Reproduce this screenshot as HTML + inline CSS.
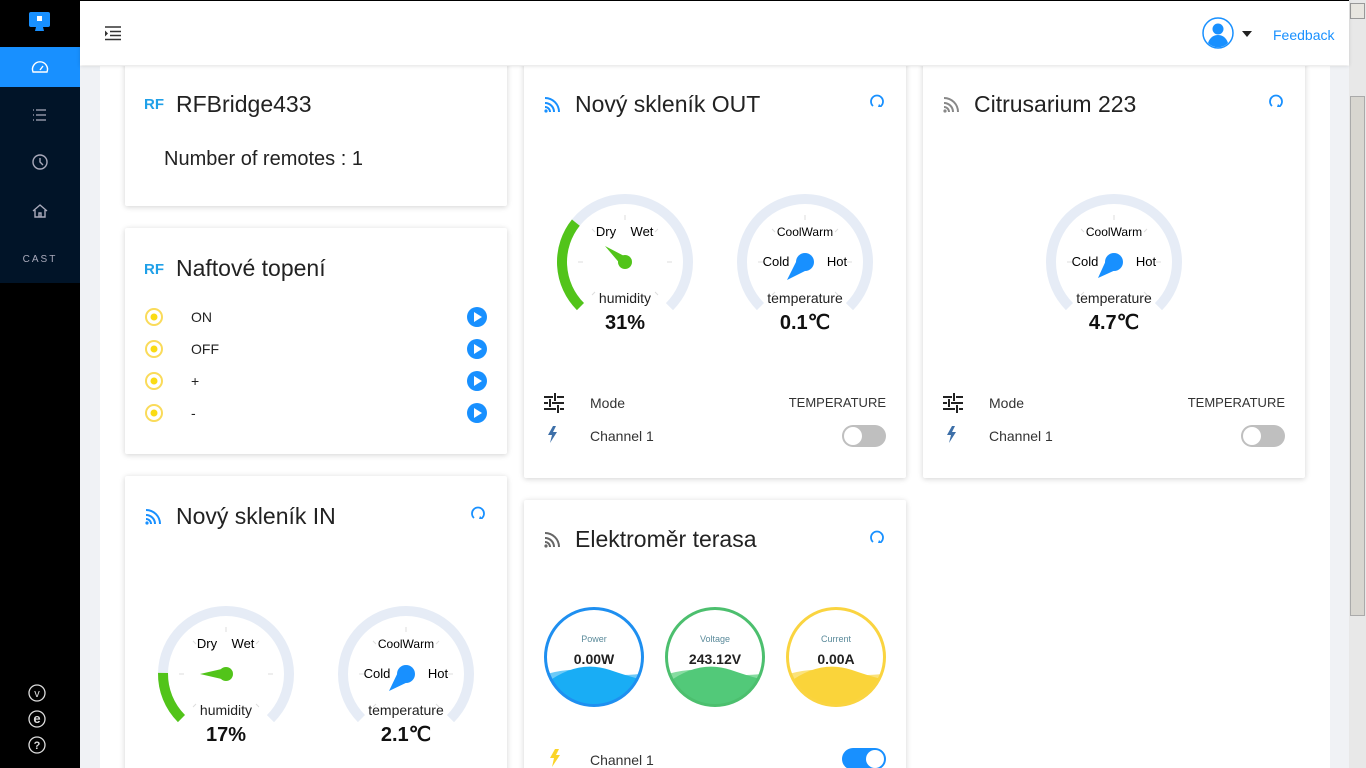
<!DOCTYPE html>
<html style="width:1366px;height:768px;overflow:hidden"><head><meta charset="utf-8"><style>
*{margin:0;padding:0;box-sizing:border-box}
body{width:1366px;height:768px;overflow:hidden;position:relative;font-family:"Liberation Sans",sans-serif;background:#f0f2f5;color:#222}
.abs{position:absolute}
.side{left:0;top:0;width:80px;height:768px;background:#000}
.nav{left:0;top:47px;width:80px;height:236px;background:#011428}
.main{left:100px;top:0;width:1230px;height:768px;background:#fff}
.hdr{left:80px;top:0;width:1269px;height:65px;background:#fff;border-top:1px solid #000;box-shadow:0 1px 4px rgba(0,0,0,.12);z-index:5}
.card{position:absolute;background:#fff;border-radius:2px;box-shadow:0 1px 6px rgba(0,0,0,.18)}
.title{position:absolute;font-size:23px;color:#222}
.lbl{position:absolute;font-size:14px;color:#333}
.tog{position:absolute;width:44px;height:22px;border-radius:11px;background:#bfbfbf}
.tog:after{content:"";position:absolute;top:2px;left:2px;width:18px;height:18px;border-radius:50%;background:#fff}
.tog.on{background:#1890ff}.tog.on:after{left:24px}
svg text{font-family:"Liberation Sans",sans-serif}
</style></head><body>
<div class="abs side"></div>
<div class="abs nav"></div>
<div class="abs" style="left:0;top:47px;width:80px;height:40px;background:#1890ff"></div>
<svg class="abs" style="left:0;top:0" width="80" height="768">
<rect x="29" y="12" width="21" height="15" rx="2" fill="#1890ff"/><rect x="37" y="16" width="5" height="5" fill="#fff"/><path d="M36 27h7l1 4h-9z" fill="#1890ff"/>
<g fill="none" stroke="#fff" stroke-width="1.4"><path d="M33 72a7.5 7.5 0 1 1 14 0z"/><path d="M40 70l3-4"/></g>
<g stroke="#aab" stroke-width="1.3"><path d="M36 110h10M36 115h10M36 120h10"/><path d="M33 110h1M33 115h1M33 120h1"/></g>
<g fill="none" stroke="#aab" stroke-width="1.4"><circle cx="40" cy="162" r="7"/><path d="M40 158v4l3 3"/><path d="M33 211l7-6 7 6M35 210v7h10v-7M39 217v-4h2v4"/></g>
<text x="40" y="262" fill="#aab" font-size="10" text-anchor="middle" letter-spacing="2">CAST</text>
<g fill="none" stroke="#ddd" stroke-width="1.3"><circle cx="37" cy="693" r="8"/><circle cx="37" cy="719" r="8"/><circle cx="37" cy="745" r="8"/></g>
<text x="37" y="697" fill="#ddd" font-size="11" text-anchor="middle">v</text>
<text x="37" y="723" fill="#ddd" font-size="13" font-weight="bold" text-anchor="middle">e</text>
<text x="37" y="749" fill="#ddd" font-size="11" font-weight="bold" text-anchor="middle">?</text>
</svg>
<div class="abs main"></div>
<div class="abs hdr">
<svg class="abs" style="left:24px;top:25px" width="18" height="15"><path d="M1 1h16M6 5.5h11M6 9.5h11M1 13.5h16" stroke="#333" stroke-width="1.5"/><path d="M1 4.5l3 3-3 3z" fill="#333"/></svg>
<svg class="abs" style="left:1122px;top:16px" width="34" height="34"><circle cx="16" cy="16" r="15" fill="#fff" stroke="#1890ff" stroke-width="1.5"/><circle cx="16" cy="12" r="5.5" fill="#1890ff"/><path d="M6 26c2-6 6-8 10-8s8 2 10 8a14 14 0 0 1-20 0z" fill="#1890ff"/></svg>
<div class="abs" style="left:1162px;top:30px;border:5px solid transparent;border-top:6px solid #222"></div>
<div class="abs" style="left:1193px;top:26px;font-size:14px;color:#1890ff">Feedback</div>
</div>
<div class="abs" style="left:1349px;top:0;width:17px;height:768px;background:#e8e8e8"></div>
<div class="abs" style="left:1350px;top:3px;width:15px;height:16px;background:#e8e6e0;border:1px solid #999"></div>
<div class="abs" style="left:1350px;top:96px;width:15px;height:520px;background:#d8d6d0;border:1px solid #aaa"></div>

<div class="card" style="left:125px;top:50px;width:382px;height:156px"></div>
<div class="abs" style="left:144px;top:96px;color:#1fa0e8;font-weight:bold;font-size:15px">RF</div>
<div class="title" style="left:176px;top:91px">RFBridge433</div>
<div class="abs" style="left:164px;top:148px;font-size:20px;color:#222">Number of remotes : 1</div>

<div class="card" style="left:125px;top:228px;width:382px;height:226px"></div>
<div class="abs" style="left:144px;top:261px;color:#1fa0e8;font-weight:bold;font-size:15px">RF</div>
<div class="title" style="left:176px;top:255px">Naftové topení</div>
<svg class="abs" style="left:140px;top:300px" width="360" height="130">
<g><circle cx="14" cy="17" r="8" fill="none" stroke="#fadb5a" stroke-width="2"/><circle cx="14" cy="17" r="3.5" fill="#fadb14"/>
<circle cx="14" cy="49" r="8" fill="none" stroke="#fadb5a" stroke-width="2"/><circle cx="14" cy="49" r="3.5" fill="#fadb14"/>
<circle cx="14" cy="81" r="8" fill="none" stroke="#fadb5a" stroke-width="2"/><circle cx="14" cy="81" r="3.5" fill="#fadb14"/>
<circle cx="14" cy="113" r="8" fill="none" stroke="#fadb5a" stroke-width="2"/><circle cx="14" cy="113" r="3.5" fill="#fadb14"/></g>
<g fill="#1890ff"><circle cx="337" cy="17" r="10"/><circle cx="337" cy="49" r="10"/><circle cx="337" cy="81" r="10"/><circle cx="337" cy="113" r="10"/></g>
<g fill="#fff"><path d="M334 12v10l8-5z"/><path d="M334 44v10l8-5z"/><path d="M334 76v10l8-5z"/><path d="M334 108v10l8-5z"/></g>
<g font-size="14" fill="#222"><text x="51" y="22">ON</text><text x="51" y="54">OFF</text><text x="51" y="86">+</text><text x="51" y="118">-</text></g>
</svg>

<div class="card" style="left:125px;top:476px;width:382px;height:320px"></div>
<svg class="abs" style="left:144px;top:508px" width="18" height="18"><g fill="none" stroke="#1890ff" stroke-width="2"><path d="M2 7a9 9 0 0 1 9 9M2 11a5 5 0 0 1 5 5M2 2a14 14 0 0 1 14 14"/></g><circle cx="3" cy="15" r="1.6" fill="#1890ff"/></svg>
<div class="title" style="left:176px;top:503px">Nový skleník IN</div>
<svg class="abs" style="left:469px;top:504px" width="18" height="18"><path d="M5 14A6 6 0 1 1 13 14" fill="none" stroke="#1890ff" stroke-width="1.8"/><path d="M11 12l3 3-4 0z" fill="#1890ff"/></svg>

<div class="card" style="left:524px;top:50px;width:382px;height:428px"></div>
<svg class="abs" style="left:543px;top:96px" width="18" height="18"><g fill="none" stroke="#1890ff" stroke-width="2"><path d="M2 7a9 9 0 0 1 9 9M2 11a5 5 0 0 1 5 5M2 2a14 14 0 0 1 14 14"/></g><circle cx="3" cy="15" r="1.6" fill="#1890ff"/></svg>
<div class="title" style="left:575px;top:91px">Nový skleník OUT</div>
<svg class="abs" style="left:868px;top:92px" width="18" height="18"><path d="M5 14A6 6 0 1 1 13 14" fill="none" stroke="#1890ff" stroke-width="1.8"/><path d="M11 12l3 3-4 0z" fill="#1890ff"/></svg>

<div class="card" style="left:524px;top:500px;width:382px;height:300px"></div>
<svg class="abs" style="left:543px;top:531px" width="18" height="18"><g fill="none" stroke="#666" stroke-width="2"><path d="M2 7a9 9 0 0 1 9 9M2 11a5 5 0 0 1 5 5M2 2a14 14 0 0 1 14 14"/></g><circle cx="3" cy="15" r="1.6" fill="#666"/></svg>
<div class="title" style="left:575px;top:526px">Elektroměr terasa</div>
<svg class="abs" style="left:868px;top:528px" width="18" height="18"><path d="M5 14A6 6 0 1 1 13 14" fill="none" stroke="#1890ff" stroke-width="1.8"/><path d="M11 12l3 3-4 0z" fill="#1890ff"/></svg>

<div class="card" style="left:923px;top:50px;width:382px;height:428px"></div>
<svg class="abs" style="left:942px;top:96px" width="18" height="18"><g fill="none" stroke="#888" stroke-width="2"><path d="M2 7a9 9 0 0 1 9 9M2 11a5 5 0 0 1 5 5M2 2a14 14 0 0 1 14 14"/></g><circle cx="3" cy="15" r="1.6" fill="#888"/></svg>
<div class="title" style="left:974px;top:91px">Citrusarium 223</div>
<svg class="abs" style="left:1267px;top:92px" width="18" height="18"><path d="M5 14A6 6 0 1 1 13 14" fill="none" stroke="#1890ff" stroke-width="1.8"/><path d="M11 12l3 3-4 0z" fill="#1890ff"/></svg>

<div class="abs" style="left:80px;top:0;width:1269px;height:66px;background:#fff;z-index:4"></div>

<svg class="abs" style="left:555px;top:192px" width="140" height="150">
<circle cx="70" cy="70" r="63" fill="none" stroke="#e6ecf6" stroke-width="10" stroke-dasharray="296.9 500" transform="rotate(135 70 70)"/>
<circle cx="70" cy="70" r="63" fill="none" stroke="#52c41a" stroke-width="10" stroke-dasharray="92 500" transform="rotate(135 70 70)"/>
<g stroke="#ddd"><path d="M70 23v5M23 70h5M112 70h5M37 37l3 3M103 37l-3 3M37 103l3-3M103 103l-3-3"/></g>
<text x="51" y="44" font-size="13" text-anchor="middle">Dry</text><text x="87" y="44" font-size="13" text-anchor="middle">Wet</text>
<path d="M50 54L73 66L67 74z" fill="#52c41a"/><circle cx="70" cy="70" r="7" fill="#52c41a"/>
<text x="70" y="111" font-size="14" text-anchor="middle" fill="#222">humidity</text>
<text x="70" y="137" font-size="20" font-weight="bold" text-anchor="middle" fill="#111">31%</text>
</svg>
<svg class="abs" style="left:735px;top:192px" width="140" height="150">
<circle cx="70" cy="70" r="63" fill="none" stroke="#e6ecf6" stroke-width="10" stroke-dasharray="296.9 500" transform="rotate(135 70 70)"/>
<g stroke="#ddd"><path d="M70 23v5M23 70h5M112 70h5M37 37l3 3M103 37l-3 3M37 103l3-3M103 103l-3-3"/></g>
<text x="70" y="44" font-size="12" text-anchor="middle">CoolWarm</text>
<text x="41" y="74" font-size="13" text-anchor="middle">Cold</text><text x="102" y="74" font-size="13" text-anchor="middle">Hot</text>
<path d="M52 88L64 64L76 76z" fill="#1890ff"/><circle cx="70" cy="70" r="9" fill="#1890ff"/>
<text x="70" y="111" font-size="14" text-anchor="middle" fill="#222">temperature</text>
<text x="70" y="137" font-size="20" font-weight="bold" text-anchor="middle" fill="#111">0.1℃</text>
</svg>
<svg class="abs" style="left:1044px;top:192px" width="140" height="150">
<circle cx="70" cy="70" r="63" fill="none" stroke="#e6ecf6" stroke-width="10" stroke-dasharray="296.9 500" transform="rotate(135 70 70)"/>
<g stroke="#ddd"><path d="M70 23v5M23 70h5M112 70h5M37 37l3 3M103 37l-3 3M37 103l3-3M103 103l-3-3"/></g>
<text x="70" y="44" font-size="12" text-anchor="middle">CoolWarm</text>
<text x="41" y="74" font-size="13" text-anchor="middle">Cold</text><text x="102" y="74" font-size="13" text-anchor="middle">Hot</text>
<path d="M54 86L64 64L76 76z" fill="#1890ff"/><circle cx="70" cy="70" r="9" fill="#1890ff"/>
<text x="70" y="111" font-size="14" text-anchor="middle" fill="#222">temperature</text>
<text x="70" y="137" font-size="20" font-weight="bold" text-anchor="middle" fill="#111">4.7℃</text>
</svg>
<svg class="abs" style="left:156px;top:604px" width="140" height="150">
<circle cx="70" cy="70" r="63" fill="none" stroke="#e6ecf6" stroke-width="10" stroke-dasharray="296.9 500" transform="rotate(135 70 70)"/>
<circle cx="70" cy="70" r="63" fill="none" stroke="#52c41a" stroke-width="10" stroke-dasharray="50.5 500" transform="rotate(135 70 70)"/>
<g stroke="#ddd"><path d="M70 23v5M23 70h5M112 70h5M37 37l3 3M103 37l-3 3M37 103l3-3M103 103l-3-3"/></g>
<text x="51" y="44" font-size="13" text-anchor="middle">Dry</text><text x="87" y="44" font-size="13" text-anchor="middle">Wet</text>
<path d="M44 70L70 64L70 76z" fill="#52c41a"/><circle cx="70" cy="70" r="7" fill="#52c41a"/>
<text x="70" y="111" font-size="14" text-anchor="middle" fill="#222">humidity</text>
<text x="70" y="137" font-size="20" font-weight="bold" text-anchor="middle" fill="#111">17%</text>
</svg>
<svg class="abs" style="left:336px;top:604px" width="140" height="150">
<circle cx="70" cy="70" r="63" fill="none" stroke="#e6ecf6" stroke-width="10" stroke-dasharray="296.9 500" transform="rotate(135 70 70)"/>
<g stroke="#ddd"><path d="M70 23v5M23 70h5M112 70h5M37 37l3 3M103 37l-3 3M37 103l3-3M103 103l-3-3"/></g>
<text x="70" y="44" font-size="12" text-anchor="middle">CoolWarm</text>
<text x="41" y="74" font-size="13" text-anchor="middle">Cold</text><text x="102" y="74" font-size="13" text-anchor="middle">Hot</text>
<path d="M53 87L64 64L76 76z" fill="#1890ff"/><circle cx="70" cy="70" r="9" fill="#1890ff"/>
<text x="70" y="111" font-size="14" text-anchor="middle" fill="#222">temperature</text>
<text x="70" y="137" font-size="20" font-weight="bold" text-anchor="middle" fill="#111">2.1℃</text>
</svg>

<svg class="abs" style="left:543px;top:393px" width="22" height="56"><g stroke="#222" stroke-width="2"><path d="M1 4h9M14 4h7M12 0v8M1 10h4M9 10h12M7 6v8M1 16h12M17 16h4M15 12v8"/></g><path d="M10 33l-5 9h4l-2 8 7-11h-4l3-6z" fill="#3d6fa8"/></svg>
<div class="lbl" style="left:590px;top:395px">Mode</div>
<div class="lbl" style="left:736px;top:395px;width:150px;text-align:right;font-size:13px">TEMPERATURE</div>
<div class="lbl" style="left:590px;top:428px">Channel 1</div>
<div class="tog" style="left:842px;top:425px"></div>

<svg class="abs" style="left:942px;top:393px" width="22" height="56"><g stroke="#222" stroke-width="2"><path d="M1 4h9M14 4h7M12 0v8M1 10h4M9 10h12M7 6v8M1 16h12M17 16h4M15 12v8"/></g><path d="M10 33l-5 9h4l-2 8 7-11h-4l3-6z" fill="#3d6fa8"/></svg>
<div class="lbl" style="left:989px;top:395px">Mode</div>
<div class="lbl" style="left:1135px;top:395px;width:150px;text-align:right;font-size:13px">TEMPERATURE</div>
<div class="lbl" style="left:989px;top:428px">Channel 1</div>
<div class="tog" style="left:1241px;top:425px"></div>

<svg class="abs" style="left:540px;top:604px" width="360" height="110">
<defs><clipPath id="c1"><circle cx="54" cy="53" r="48"/></clipPath><clipPath id="c2"><circle cx="175" cy="53" r="48"/></clipPath><clipPath id="c3"><circle cx="296" cy="53" r="48"/></clipPath></defs>
<g clip-path="url(#c1)"><path d="M0 72q30-10 54-4t60 0v50H0z" fill="#6ccaf7"/><path d="M0 84q35-30 70-18t40 10v50H0z" fill="#19adf5"/></g>
<g clip-path="url(#c2)"><path d="M121 72q30-10 54-4t60 0v50H121z" fill="#86dca0"/><path d="M121 84q35-30 70-18t40 10v50H121z" fill="#52c979"/></g>
<g clip-path="url(#c3)"><path d="M242 72q30-10 54-4t60 0v50H242z" fill="#fbe27a"/><path d="M242 84q35-30 70-18t40 10v50H242z" fill="#fad43a"/></g>
<circle cx="54" cy="53" r="48.5" fill="none" stroke="#1e8ff0" stroke-width="3"/>
<circle cx="175" cy="53" r="48.5" fill="none" stroke="#4cbf6e" stroke-width="3"/>
<circle cx="296" cy="53" r="48.5" fill="none" stroke="#fad440" stroke-width="3"/>
<g font-size="9" fill="#5a8a9a" text-anchor="middle"><text x="54" y="38">Power</text><text x="175" y="38">Voltage</text><text x="296" y="38">Current</text></g>
<g font-size="14" font-weight="bold" fill="#222" text-anchor="middle"><text x="54" y="60">0.00W</text><text x="175" y="60">243.12V</text><text x="296" y="60">0.00A</text></g>
</svg>
<svg class="abs" style="left:549px;top:749px" width="14" height="19"><path d="M6 0l-5 9h4l-2 9 8-12h-4l3-6z" fill="#fad428"/></svg>
<div class="lbl" style="left:590px;top:752px">Channel 1</div>
<div class="tog on" style="left:842px;top:748px"></div>
</body></html>
